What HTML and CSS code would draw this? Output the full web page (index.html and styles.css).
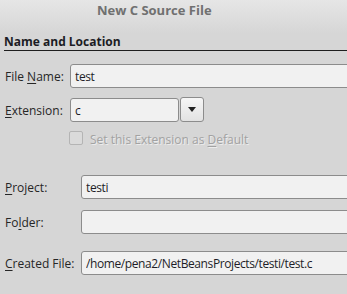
FILE: index.html
```html
<!DOCTYPE html>
<html lang="en">
<head>
    <meta charset="UTF-8">
    <meta name="viewport" content="width=device-width, initial-scale=1.0">
    <title>New C Source File</title>
    <link rel="stylesheet" href="styles.css">
</head>
<body>
    <div class="dialog">
        <div class="titlebar">
            <span class="title">New C Source File</span>
        </div>

        <h2 class="section-title">Name and Location</h2>

        <div class="form">
            <div class="row row-name">
                <label class="label label-short" for="file_name">File <u>N</u>ame:</label>
                <input class="field" type="text" id="file_name" value="test">
            </div>

            <div class="row row-ext">
                <label class="label label-short" for="extension"><u>E</u>xtension:</label>
                <input class="field field-ext" type="text" id="extension" value="c">
                <button class="combo-btn" type="button"><span class="arrow"></span></button>
            </div>

            <div class="row row-check">
                <span class="checkbox"></span>
                <span class="check-label">Set this Extension as <u>D</u>efault</span>
            </div>

            <div class="row row-project">
                <label class="label label-long" for="project"><u>P</u>roject:</label>
                <input class="field" type="text" id="project" value="testi">
            </div>

            <div class="row row-folder">
                <label class="label label-long" for="folder">Fo<u>l</u>der:</label>
                <input class="field" type="text" id="folder" value="">
            </div>

            <div class="row row-created">
                <label class="label label-long" for="created"><u>C</u>reated File:</label>
                <input class="field" type="text" id="created" value="/home/pena2/NetBeansProjects/testi/test.c">
            </div>
        </div>
    </div>
</body>
</html>
```

FILE: styles.css
```css
body {
    font-family: "Open Sans", "Noto Sans", sans-serif;
    font-size: 12px;
    background-color: #d6d6d6;
    color: #262626;
    margin: 0;
    padding: 0;
    overflow: hidden;
}

.dialog {
    width: 347px;
    height: 294px;
    overflow: hidden;
}

.titlebar {
    height: 33px;
    background: linear-gradient(#e6e6e6, #d6d6d6);
}

.title {
    display: block;
    padding-left: 97px;
    line-height: 21px;
    font-size: 13px;
    font-weight: bold;
    color: #707070;
}

.section-title {
    margin: 0 0 0 4px;
    height: 17px;
    line-height: 17px;
    font-size: 12px;
    font-weight: bold;
    color: #1c1c24;
    border-bottom: 1px solid #1e1e1e;
}

.form {
    display: flex;
    flex-direction: column;
}

.row {
    display: flex;
    align-items: center;
    height: 24px;
}

.row-name { margin-top: 13px; }
.row-ext { margin-top: 10px; }
.row-check { margin-top: 8px; height: 14px; }
.row-project { margin-top: 31px; }
.row-folder { margin-top: 11px; }
.row-created { margin-top: 17px; }

.label {
    flex: none;
    padding-left: 5px;
    box-sizing: border-box;
}

.label-short { width: 70px; }
.label-long { width: 81px; }

u {
    text-decoration: underline;
    text-underline-offset: 2px;
}

.field {
    flex: none;
    box-sizing: border-box;
    width: 400px;
    height: 24px;
    margin: 0;
    padding: 0 4px;
    font-family: inherit;
    font-size: 12px;
    letter-spacing: -0.4px;
    color: #1e1e28;
    background-color: #f1f1f1;
    border: 1px solid #8c8c8c;
    border-radius: 3px;
    outline: none;
}

.field-ext {
    width: 109px;
}

.combo-btn {
    box-sizing: border-box;
    width: 24px;
    height: 25px;
    margin: -1px 0 0 1px;
    padding: 0;
    background: linear-gradient(#f6f6f6, #e2e2e2);
    border: 1px solid #8c8c8c;
    border-radius: 3px;
    display: flex;
    align-items: center;
    justify-content: center;
}

.arrow {
    width: 0;
    height: 0;
    border-left: 4px solid transparent;
    border-right: 4px solid transparent;
    border-top: 5px solid #222;
}

.checkbox {
    box-sizing: border-box;
    width: 14px;
    height: 14px;
    margin-left: 69px;
    margin-top: 2px;
    border: 1px solid #b4b4b4;
    border-radius: 2px;
    background-color: #dadada;
}

.check-label {
    margin-left: 7px;
    margin-top: 4px;
    color: #a2a2a2;
    text-shadow: 1px 1px 0 #ececec;
}
```
